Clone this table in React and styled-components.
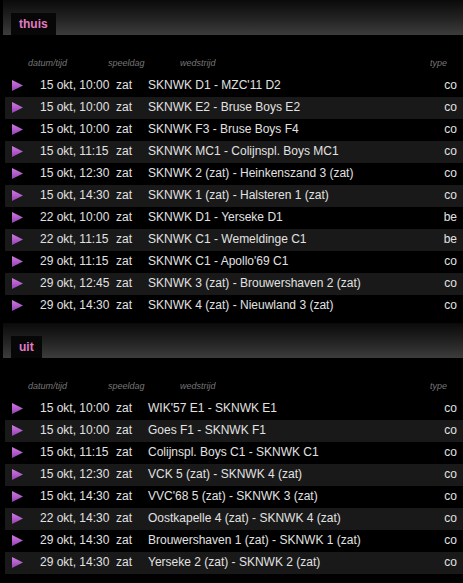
import React from "react";
import styled, { createGlobalStyle } from "styled-components";

const Global = createGlobalStyle`
  html, body { margin: 0; padding: 0; background: #000; }
  body { font-family: "Liberation Sans", Arial, sans-serif; }
`;

const Page = styled.div`
  width: 463px;
  height: 583px;
  background: #000;
  overflow: hidden;
  display: flex;
  flex-direction: column;
  gap: 6px;
`;

const Section = styled.section`
  display: flex;
  flex-direction: column;
`;

const SectionHeader = styled.div`
  margin-left: 3px;
  height: 35px;
  box-sizing: border-box;
  padding: 13px 0 0 8px;
  background: linear-gradient(to bottom, #0a0a0a 0%, #242424 55%, #3c3c3c 100%);
  display: flex;
  align-items: flex-end;
`;

const Tab = styled.div`
  height: 22px;
  line-height: 23px;
  padding: 0 8px;
  background: #070707;
  color: #e27bc4;
  font-weight: bold;
  font-size: 12px;
`;

const ColumnHeads = styled.div`
  margin-left: 5px;
  height: 40px;
  box-sizing: border-box;
  padding: 22px 16px 0 23px;
  display: grid;
  grid-template-columns: 80px 72px 1fr auto;
  font-size: 9px;
  line-height: 12px;
  font-style: italic;
  color: #767676;
`;

const Row = styled.div`
  margin-left: 5px;
  height: 22px;
  box-sizing: border-box;
  padding: 0 6px 0 7px;
  display: grid;
  grid-template-columns: 28px 76px 32px 1fr auto;
  align-items: center;
  background: ${(p) => (p.$alt ? "#191919" : "#000")};
  color: #e2e2e2;
  font-size: 12px;
  line-height: 20px;
  white-space: nowrap;
`;

const Cell = styled.span`
  padding-bottom: 2px;
`;

const PlayIcon = styled.svg`
  width: 11px;
  height: 11px;
  display: block;
  margin-bottom: 2px;
`;

function Play({ id }) {
  return (
    <PlayIcon viewBox="0 0 11 11">
      <defs>
        <linearGradient id={id} x1="0" y1="0" x2="0" y2="1">
          <stop offset="0" stopColor="#cf7ae0" />
          <stop offset="1" stopColor="#9440b4" />
        </linearGradient>
      </defs>
      <polygon points="0,0 11,5.5 0,11" fill={`url(#${id})`} />
    </PlayIcon>
  );
}

const thuis = [
  ["15 okt, 10:00", "SKNWK D1 - MZC'11 D2", "co"],
  ["15 okt, 10:00", "SKNWK E2 - Bruse Boys E2", "co"],
  ["15 okt, 10:00", "SKNWK F3 - Bruse Boys F4", "co"],
  ["15 okt, 11:15", "SKNWK MC1 - Colijnspl. Boys MC1", "co"],
  ["15 okt, 12:30", "SKNWK 2 (zat) - Heinkenszand 3 (zat)", "co"],
  ["15 okt, 14:30", "SKNWK 1 (zat) - Halsteren 1 (zat)", "co"],
  ["22 okt, 10:00", "SKNWK D1 - Yerseke D1", "be"],
  ["22 okt, 11:15", "SKNWK C1 - Wemeldinge C1", "be"],
  ["29 okt, 11:15", "SKNWK C1 - Apollo'69 C1", "co"],
  ["29 okt, 12:45", "SKNWK 3 (zat) - Brouwershaven 2 (zat)", "co"],
  ["29 okt, 14:30", "SKNWK 4 (zat) - Nieuwland 3 (zat)", "co"],
];

const uit = [
  ["15 okt, 10:00", "WIK'57 E1 - SKNWK E1", "co"],
  ["15 okt, 10:00", "Goes F1 - SKNWK F1", "co"],
  ["15 okt, 11:15", "Colijnspl. Boys C1 - SKNWK C1", "co"],
  ["15 okt, 12:30", "VCK 5 (zat) - SKNWK 4 (zat)", "co"],
  ["15 okt, 14:30", "VVC'68 5 (zat) - SKNWK 3 (zat)", "co"],
  ["22 okt, 14:30", "Oostkapelle 4 (zat) - SKNWK 4 (zat)", "co"],
  ["29 okt, 14:30", "Brouwershaven 1 (zat) - SKNWK 1 (zat)", "co"],
  ["29 okt, 14:30", "Yerseke 2 (zat) - SKNWK 2 (zat)", "co"],
];

function Schedule({ title, rows, prefix }) {
  return (
    <Section>
      <SectionHeader>
        <Tab>{title}</Tab>
      </SectionHeader>
      <ColumnHeads>
        <span>datum/tijd</span>
        <span>speeldag</span>
        <span>wedstrijd</span>
        <span>type</span>
      </ColumnHeads>
      {rows.map((r, i) => (
        <Row key={i} $alt={i % 2 === 1}>
          <Play id={`${prefix}-g${i}`} />
          <Cell>{r[0]}</Cell>
          <Cell>zat</Cell>
          <Cell>{r[1]}</Cell>
          <Cell>{r[2]}</Cell>
        </Row>
      ))}
    </Section>
  );
}

export default function App() {
  return (
    <>
      <Global />
      <Page>
        <Schedule title="thuis" rows={thuis} prefix="t" />
        <Schedule title="uit" rows={uit} prefix="u" />
      </Page>
    </>
  );
}
